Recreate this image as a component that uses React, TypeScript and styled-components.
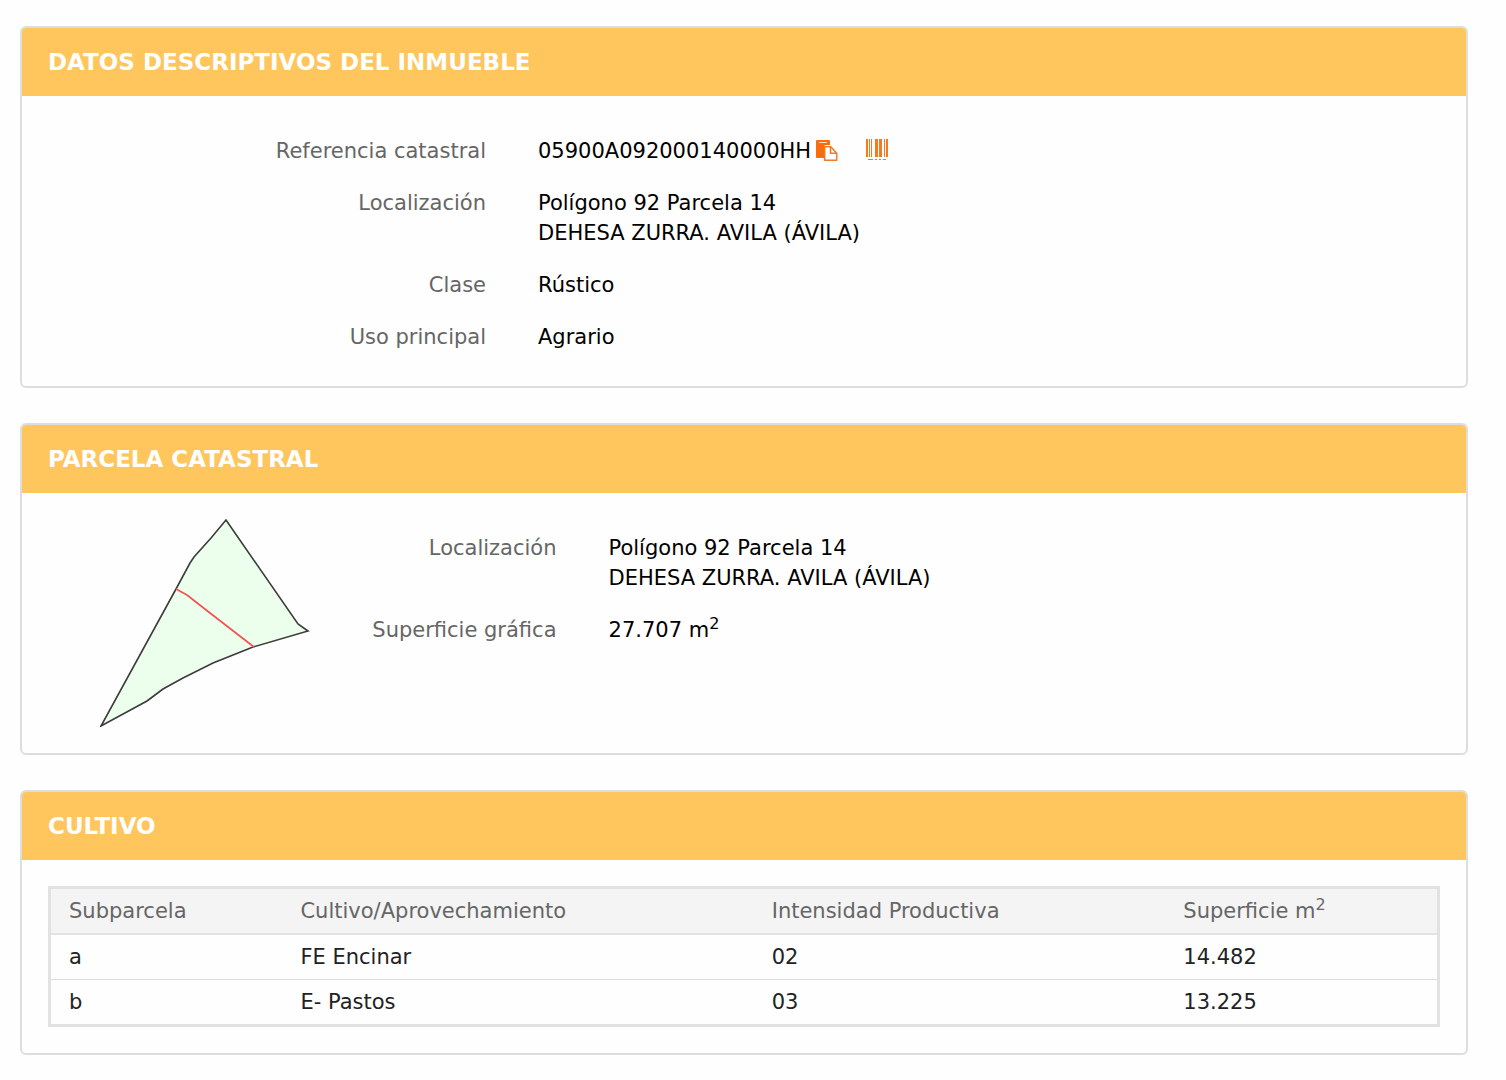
import React from 'react';
import styled, { createGlobalStyle } from 'styled-components';

const GlobalStyle = createGlobalStyle`
  *, *::before, *::after { box-sizing: border-box; }
  body {
    margin: 0;
    background: #fefefe;
    color: #000;
    font-family: Verdana, "DejaVu Sans", sans-serif;
    font-size: 21px;
    line-height: 30px;
  }
`;

const Page = styled.main`
  display: flex;
  flex-direction: column;
  gap: 35px;
  padding: 26px 38px 26px 20px;
`;

const Panel = styled.section`
  border: 2px solid #dddddd;
  border-radius: 6px;
  background: #fefefe;
  overflow: hidden;
`;

const PanelHeading = styled.h2`
  margin: 0;
  padding: 19px 26px;
  background: #fec65c;
  color: #fff;
  font-size: 23px;
  font-weight: 700;
  line-height: 30px;
`;

const PanelBody = styled.div<{ $split?: boolean }>`
  display: ${(p) => (p.$split ? 'flex' : 'block')};
  padding: 26px;
`;

const Details = styled.dl<{ $label: string }>`
  flex: 1;
  display: grid;
  grid-template-columns: ${(p) => p.$label} 1fr;
  align-content: start;
  row-gap: 22px;
  margin: 0;
  padding: 14px 0 8px;
`;

const Label = styled.dt`
  padding-right: 26px;
  color: #666;
  text-align: right;
`;

const Value = styled.dd`
  margin: 0;
  padding-left: 26px;
`;

const Reference = styled.span`
  display: flex;
  align-items: center;
`;

const IconButton = styled.button`
  display: flex;
  margin: 0 0 0 4px;
  padding: 0;
  border: 0;
  background: none;
  color: #f47a20;
  cursor: pointer;

  & + & { margin-left: 26px; }
`;

const Media = styled.div`
  flex: 0 0 20%;
  display: flex;
  justify-content: flex-end;
  padding-right: 16px;
`;

const Sup = styled.sup`
  font-size: 16px;
  line-height: 0;
`;

const CropTable = styled.table`
  width: 100%;
  table-layout: fixed;
  border: 3px solid #e2e2e2;
  border-spacing: 0;
  color: #222;
  text-align: left;
`;

const HeadCell = styled.th<{ $width: string }>`
  width: ${(p) => p.$width};
  padding: 7px 18px;
  border-bottom: 2px solid #e2e2e2;
  background: #f4f4f4;
  color: #666;
  font-weight: 400;
`;

const Cell = styled.td`
  padding: 7px 18px;

  tr:not(:last-child) > & { border-bottom: 1px solid #dddddd; }
`;

const PasteIcon = () => (
  <svg width="24" height="24" viewBox="0 1 24 24" aria-hidden="true">
    <path fill="#f96d0c" d="M2 2h12a1 1 0 0 1 1 1v4h-4a2 2 0 0 0-2 2v11H2a1 1 0 0 1-1-1V3a1 1 0 0 1 1-1z" />
    <path stroke="#fde3cc" strokeWidth="1" d="M4 4.5h8" />
    <path fill="#fff" stroke="currentColor" strokeWidth="1.5" strokeLinejoin="round" d="M9.7 8.7h6.1l5.9 6.6v7H9.7z" />
    <path fill="none" stroke="currentColor" strokeWidth="1.5" d="M15.5 8.7v6.6h6.2" />
  </svg>
);

const BarcodeIcon = () => (
  <svg width="24" height="24" viewBox="0 1 24 24" aria-hidden="true">
    <path fill="currentColor" d="M1 1h2v18H1zM4 1h1v18H4zM6 1h1v18H6zM10 1h3v18h-3zM14 1h3v18h-3zM19 1h1v18h-1zM21 1h2v18h-2zM3 21h5v1H3zM10 21h2v1h-2zM14 21h2v1h-2zM18 21h3v1h-3z" />
  </svg>
);

const ParcelDrawing = () => (
  <svg width="212" height="208" viewBox="0 0 212 208" role="img" aria-label="Parcela">
    <path
      fill="#ecffec"
      stroke="#3c3c3c"
      strokeWidth="1.6"
      d="M128 1L200 105L210 112L155 128L115 144L85 159L65 170L49 182L3 207L78 70L92 44L96 38L113 19Z"
    />
    <path fill="none" stroke="#f25555" strokeWidth="1.8" d="M78 70L89 76L112 94L156 128" />
  </svg>
);

const crops = [
  { plot: 'a', use: 'FE Encinar', intensity: '02', area: '14.482' },
  { plot: 'b', use: 'E- Pastos', intensity: '03', area: '13.225' },
];

const Location = () => (
  <>
    <Label>Localización</Label>
    <Value>
      Polígono 92 Parcela 14
      <br />
      DEHESA ZURRA. AVILA (ÁVILA)
    </Value>
  </>
);

export default function App() {
  return (
    <>
      <GlobalStyle />
      <Page>
        <Panel>
          <PanelHeading>DATOS DESCRIPTIVOS DEL INMUEBLE</PanelHeading>
          <PanelBody>
            <Details $label="calc(100% / 3)">
              <Label>Referencia catastral</Label>
              <Value>
                <Reference>
                  05900A092000140000HH
                  <IconButton type="button" aria-label="Copiar"><PasteIcon /></IconButton>
                  <IconButton type="button" aria-label="Código de barras"><BarcodeIcon /></IconButton>
                </Reference>
              </Value>
              <Location />
              <Label>Clase</Label>
              <Value>Rústico</Value>
              <Label>Uso principal</Label>
              <Value>Agrario</Value>
            </Details>
          </PanelBody>
        </Panel>

        <Panel>
          <PanelHeading>PARCELA CATASTRAL</PanelHeading>
          <PanelBody $split>
            <Media><ParcelDrawing /></Media>
            <Details $label="23%">
              <Location />
              <Label>Superficie gráfica</Label>
              <Value>27.707 m<Sup>2</Sup></Value>
            </Details>
          </PanelBody>
        </Panel>

        <Panel>
          <PanelHeading>CULTIVO</PanelHeading>
          <PanelBody>
            <CropTable>
              <thead>
                <tr>
                  <HeadCell scope="col" $width="16.7%">Subparcela</HeadCell>
                  <HeadCell scope="col" $width="34%">Cultivo/Aprovechamiento</HeadCell>
                  <HeadCell scope="col" $width="29.7%">Intensidad Productiva</HeadCell>
                  <HeadCell scope="col" $width="19.6%">Superficie m<Sup>2</Sup></HeadCell>
                </tr>
              </thead>
              <tbody>
                {crops.map((c) => (
                  <tr key={c.plot}>
                    <Cell>{c.plot}</Cell>
                    <Cell>{c.use}</Cell>
                    <Cell>{c.intensity}</Cell>
                    <Cell>{c.area}</Cell>
                  </tr>
                ))}
              </tbody>
            </CropTable>
          </PanelBody>
        </Panel>
      </Page>
    </>
  );
}
